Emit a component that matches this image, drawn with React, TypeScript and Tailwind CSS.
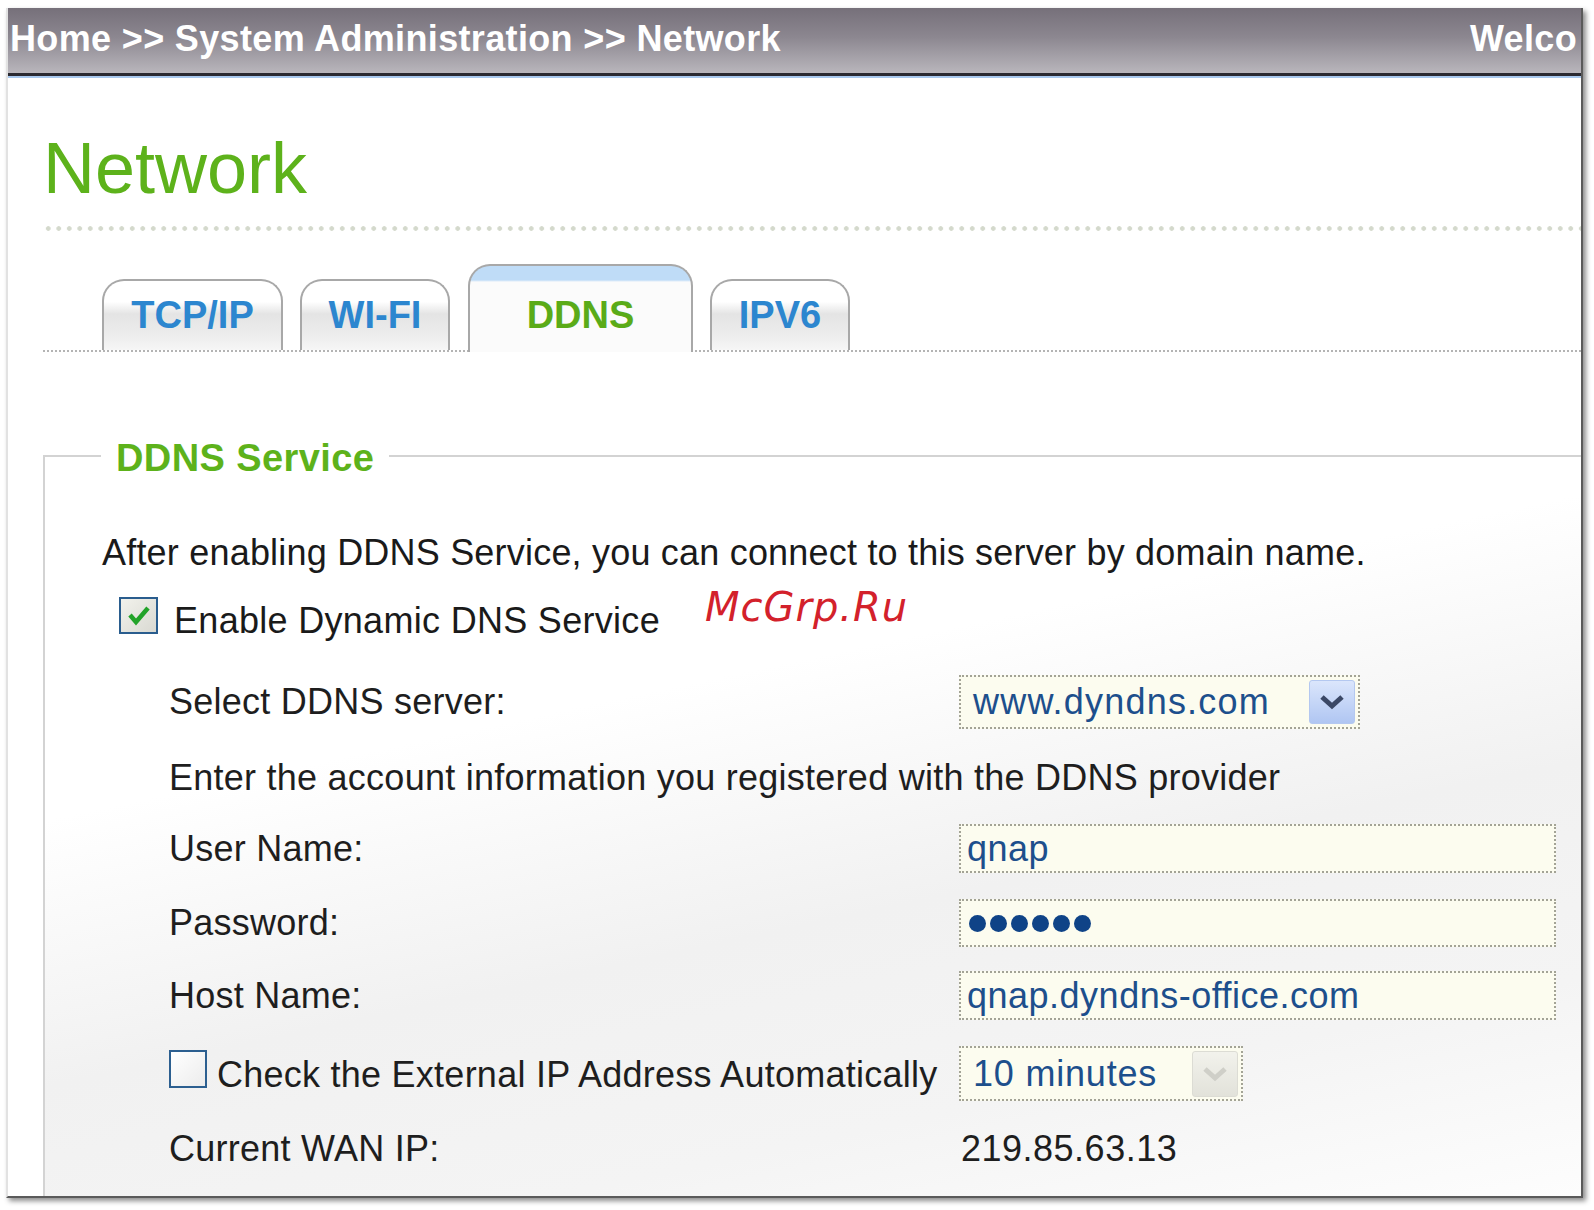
const sans = "font-['Liberation_Sans',Arial,sans-serif]";

const Chevron = ({ color }: { color: string }) => (
  <svg width="26" height="18" viewBox="0 0 26 18" fill="none">
    <path d="M3 4 L13 13 L23 4" stroke={color} strokeWidth="5" strokeLinejoin="miter" />
  </svg>
);

const Tab = ({ label }: { label: string }) => (
  <div className="flex h-[71px] items-center justify-center rounded-t-[22px] border-2 border-b-0 border-[#a8a8a8] bg-[linear-gradient(180deg,#ffffff_0%,#ffffff_30%,#e4e4e4_48%,#ededed_80%,#f6f6f6_100%)]">
    <span className="text-[38px] font-bold text-[#2c86cf]">{label}</span>
  </div>
);

const TextBox = ({ children, w }: { children: React.ReactNode; w: string }) => (
  <div className={`${w} flex h-full items-center border-2 border-dotted border-[#a3a396] bg-[#fcfcef] pl-[6px] text-[36px] tracking-[0.5px] text-[#1d4f8c]`}>
    {children}
  </div>
);

export default function App() {
  return (
    <div className={`min-h-[1210px] bg-white pt-[8px] pl-[6px] ${sans}`}>
      <div className="relative h-[1190px] w-[1577px] overflow-hidden border-l-2 border-r-2 border-b-2 border-l-[#e2e2e2] border-r-[#5a5a5a] border-b-[#5a5a5a] bg-white shadow-[3px_3px_5px_rgba(0,0,0,0.45)]">
        {/* breadcrumb bar */}
        <div className="flex h-[65px] items-center bg-[linear-gradient(180deg,#76707a_0%,#8c8790_45%,#b9b6bc_100%)] pb-[4px] pl-[2px] pr-[4px] text-[36px] font-bold tracking-[0.35px] text-white">
          <span className="whitespace-nowrap">Home &gt;&gt; System Administration &gt;&gt; Network</span>
          <span className="ml-auto whitespace-nowrap">Welco</span>
        </div>
        <div className="h-[3px] bg-[#2b2a31]" />
        <div className="h-[2px] bg-[#a8c8ee]" />

        <div className="pl-[35px]">
          <h1 className="mt-[50px] text-[72px] leading-[80px] text-[#5db21b]">Network</h1>
          <div className="mt-[18px] h-[5px] bg-[radial-gradient(circle,#d4d9cc_2px,transparent_2.6px)] bg-[length:10.5px_5px]" />

          {/* tabs */}
          <div className="mt-[33px] flex h-[88px] items-end border-b-2 border-dotted border-[#b4b4b4]">
            <div className="ml-[59px] w-[181px]"><Tab label="TCP/IP" /></div>
            <div className="ml-[17px] w-[150px]"><Tab label="WI-FI" /></div>
            <div className="relative -mb-[2px] ml-[18px] flex h-[88px] w-[225px] items-center justify-center rounded-t-[22px] border-2 border-b-0 border-[#a8a8a8] bg-[linear-gradient(180deg,#bfdcf7_0px,#bfdcf7_14px,#fbfbfb_16px,#fbfbfb_100%)] pt-[12px]">
              <span className="text-[38px] font-bold text-[#5aab18]">DDNS</span>
            </div>
            <div className="ml-[17px] w-[140px]"><Tab label="IPV6" /></div>
          </div>

          {/* fieldset */}
          <fieldset className="mt-[79px] h-[900px] w-[1600px] border-2 border-[#d3d3d3] bg-[linear-gradient(168deg,#ffffff_30%,#f1f1f1_52%,#f4f4f4_70%,#ffffff_92%)]">
            <legend className="ml-[56px] px-[15px] pt-[5px] text-[38px] leading-[44px] font-bold tracking-[0.4px] text-[#5db21b]">DDNS Service</legend>

            <div className="mt-[51px] flex h-[44px] items-center pl-[57px] text-[36px] tracking-[0.2px] text-[#1a1a1a]">
              After enabling DDNS Service, you can connect to this server by domain name.
            </div>

            <div className="mt-[22px] flex h-[44px] items-center pl-[74px] text-[36px] tracking-[0.3px] text-[#1a1a1a]">
              <div className="mb-[8px] flex h-[37px] w-[39px] items-center justify-center border-2 border-[#2a5d8e] bg-[linear-gradient(135deg,#f2f2ec,#d9d9d2)]">
                <svg width="24" height="22" viewBox="0 0 24 22">
                  <path d="M3 11 L9 18 L21 4" fill="none" stroke="#22a329" strokeWidth="4.5" />
                </svg>
              </div>
              <span className="ml-[16px] mt-[4px]">Enable Dynamic DNS Service</span>
            </div>

            <div className="pl-[124px] text-[36px] tracking-[0.25px] text-[#1e1e1e]">
              <div className="mt-[34px] flex h-[54px] items-center">
                <div className="w-[790px]">Select DDNS server:</div>
                <div className="flex h-full w-[401px] items-center border-2 border-dotted border-[#a3a396] bg-[#fcfcef] pl-[12px] text-[36px] tracking-[1.2px] text-[#1d4f8c]">
                  <span>www.dyndns.com</span>
                  <div className="ml-auto mr-[3px] flex h-[44px] w-[46px] items-center justify-center rounded-[3px] border border-[#b4c8f0] bg-[linear-gradient(180deg,#dbe6fc,#b0c6f2)]">
                    <Chevron color="#3b4866" />
                  </div>
                </div>
              </div>

              <div className="mt-[27px] flex h-[44px] items-center">
                Enter the account information you registered with the DDNS provider
              </div>

              <div className="mt-[24px] flex h-[49px] items-center">
                <div className="w-[790px]">User Name:</div>
                <TextBox w="w-[597px]">qnap</TextBox>
              </div>

              <div className="mt-[26px] flex h-[48px] items-center">
                <div className="w-[790px]">Password:</div>
                <TextBox w="w-[597px]">
                  <div className="flex gap-[4px] pl-[2px]">
                    {[0, 1, 2, 3, 4, 5].map((i) => (
                      <span key={i} className="h-[17px] w-[17px] rounded-full bg-[#0f4387]" />
                    ))}
                  </div>
                </TextBox>
              </div>

              <div className="mt-[24px] flex h-[49px] items-center">
                <div className="w-[790px]">Host Name:</div>
                <TextBox w="w-[597px]">qnap.dyndns-office.com</TextBox>
              </div>

              <div className="mt-[26px] flex h-[55px] items-center">
                <div className="flex w-[790px] items-center">
                  <div className="mb-[10px] h-[38px] w-[38px] border-2 border-[#2c5f90] bg-[linear-gradient(135deg,#ffffff,#ececec)]" />
                  <span className="ml-[10px] mt-[2px] whitespace-nowrap">Check the External IP Address Automatically</span>
                </div>
                <div className="flex h-full w-[284px] items-center border-2 border-dotted border-[#a3a396] bg-[#fcfcef] pl-[12px] text-[36px] tracking-[0.8px] text-[#1d4f8c]">
                  <span>10 minutes</span>
                  <div className="ml-auto mr-[3px] flex h-[46px] w-[46px] items-center justify-center rounded-[3px] border border-[#dcdcd4] bg-[linear-gradient(180deg,#f2f2ec,#e2e2da)]">
                    <Chevron color="#cfcfc8" />
                  </div>
                </div>
              </div>

              <div className="mt-[26px] flex h-[44px] items-center">
                <div className="w-[790px]">Current WAN IP:</div>
                <div className="pl-[2px] tracking-[0.5px]">219.85.63.13</div>
              </div>
            </div>
          </fieldset>
        </div>

        {/* watermark */}
        <div className="absolute left-[697px] top-[575px] font-['DejaVu_Sans',sans-serif] text-[40px] leading-[48px] italic tracking-[1px] text-[#d3212b]">
          McGrp.Ru
        </div>
      </div>
    </div>
  );
}
